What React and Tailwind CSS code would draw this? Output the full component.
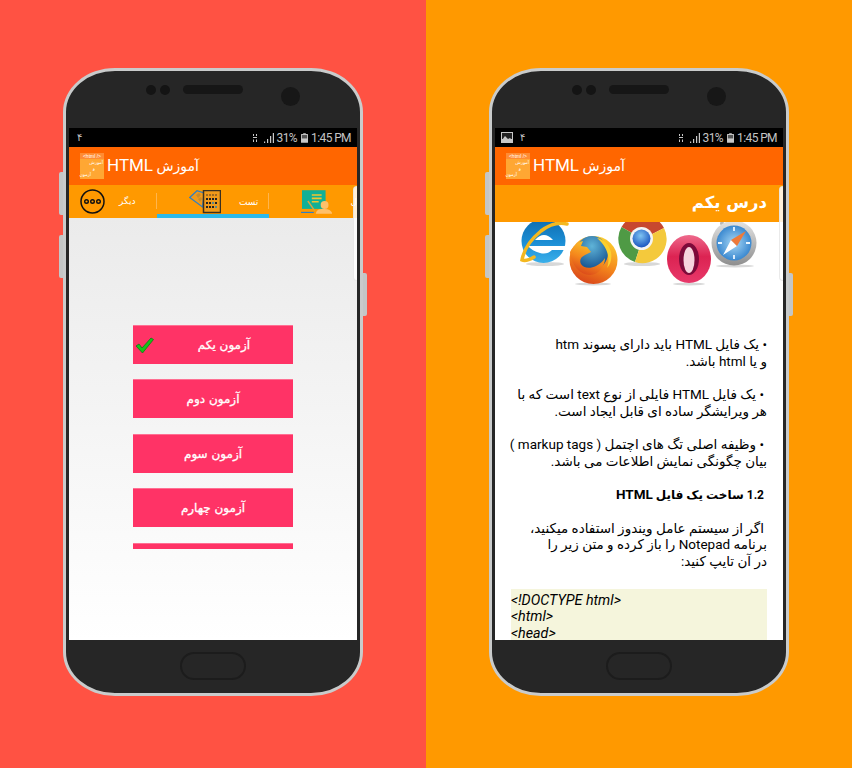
const font = "font-['Roboto','DejaVu_Sans',sans-serif]";

function SignalIcon() {
  return (
    <svg width="24" height="10" viewBox="0 0 24 10" className="text-[#c8c8c8]">
      <path d="M3 1h1v2H3zM6 1h1v2H6zM3 4h4v1H3zM3 6.500h1V9H3zM6 6.500h1V9H6z" fill="currentColor" />
      <path d="M14 8.500h1.200V10H14zM17 6h1.200v4H17zM20 3h1.200v7H20zM22.800 0H24v10h-1.200z" fill="currentColor" />
    </svg>
  );
}

function BatteryIcon() {
  return (
    <svg width="7" height="10" viewBox="0 0 8 11">
      <path d="M2.500 0h3v1H7.500a.5.5 0 0 1 .5.500v9a.5.5 0 0 1-.5.500H.5a.5.5 0 0 1-.5-.5v-9A.5.5 0 0 1 .5 1h2z" fill="#c8c8c8" />
      <rect x="1" y="2" width="6" height="4" fill="#555" />
    </svg>
  );
}

function StatusBar({ withImage }) {
  return (
    <div className="h-[19px] shrink-0 bg-black flex items-center pl-[5px] pr-[6px] text-[#c4c4c4]">
      {withImage && (
        <svg width="12" height="11" viewBox="0 0 12 11" className="ml-[1px] mr-[7px]">
          <rect width="12" height="11" fill="#c8c8c8" />
          <rect x="1" y="1" width="10" height="6" fill="#222" />
          <path d="M1 8l3-4 3 3 2-1 2 2v2H1z" fill="#c8c8c8" />
        </svg>
      )}
      <span className={`text-[10px] ${withImage ? "" : "ml-[3px]"} font-['DejaVu_Sans',sans-serif]`}>۴</span>
      <div className="ml-auto flex items-center text-[12px] tracking-[-0.600px] font-['Roboto',sans-serif]">
        <SignalIcon />
        <span className="ml-[3px]">31%</span>
        <span className="ml-[4px]"><BatteryIcon /></span>
        <span className="ml-[3px]">1:45 PM</span>
      </div>
    </div>
  );
}

function AppBar() {
  return (
    <div className="h-[38px] shrink-0 bg-[#ff6600] flex items-center pl-[11px]">
      <div className="w-[24px] h-[26px] bg-[#ffa733] text-white text-[4.500px] leading-[6px] font-['DejaVu_Sans',sans-serif]">
        <div className="h-[6px] bg-[#ff8c33] text-center font-['Liberation_Sans',sans-serif] text-[5px]">&lt;html /&gt;</div>
        <div dir="rtl" className="pr-[1px] pt-[1px]">
          <div>آموزش</div>
          <div className="pr-[8px]">و</div>
          <div className="pr-[12px]">آزمون</div>
        </div>
      </div>
      <span dir="rtl" className={`ml-[3px] text-[14px] text-white ${font}`}>آموزش <span className="text-[17px]">HTML</span></span>
    </div>
  );
}

function Handle() {
  return <div className="absolute right-0 top-[58px] w-[4px] h-[95px] rounded-l-[5px] bg-white/85 border border-r-0 border-[#dddddd]/60" />;
}

function Phone({ children, withImage }) {
  return (
    <div className="relative w-[300px] h-[628px] rounded-[52px/44px] border-[3px] border-[#c9cbcb] bg-[#262626]">
      <div className="absolute left-[-7px] top-[101px] w-[4px] h-[43px] rounded-l-[2px] bg-[#c4c6c6]" />
      <div className="absolute left-[-7px] top-[164px] w-[4px] h-[43px] rounded-l-[2px] bg-[#c4c6c6]" />
      <div className="absolute right-[-7px] top-[202px] w-[4px] h-[43px] rounded-r-[2px] bg-[#c4c6c6]" />
      <div className="h-[57px] flex items-start pl-[80px] pt-[14px]">
        <div className="w-[10px] h-[10px] rounded-full bg-[#141414]" />
        <div className="ml-[4px] w-[10px] h-[10px] rounded-full bg-[#141414]" />
        <div className="ml-[13px] w-[60px] h-[9px] rounded-full bg-[#161616]" />
        <div className="ml-[38px] mt-[2px] w-[19px] h-[19px] rounded-full bg-[#171717]" />
      </div>
      <div className="mx-[3px] h-[512px] bg-white overflow-hidden relative flex flex-col">
        <StatusBar withImage={withImage} />
        <AppBar />
        {children}
      </div>
      <div className="flex justify-center pt-[12px]">
        <div className="w-[66px] h-[28px] rounded-[14px] border-[2px] border-[#1c1c1c]" />
      </div>
    </div>
  );
}

function TestIcon() {
  return (
    <svg width="32" height="24" viewBox="0 0 32 24">
      <path d="M0.700 7.500L8 0.800L15 3L13.500 17z" fill="#f09a1a" stroke="#2f7fc4" strokeWidth="1.200" />
      <path d="M7 5l3-2 2 2-3 3zM9 9l3-2 1 2-2 3z" fill="#c98a2a" />
      <rect x="14.500" y="0.500" width="17" height="22" fill="#f09a1a" stroke="#3a3020" strokeWidth="1.500" />
      <g fill="#222">
        <rect x="17" y="4" width="2" height="2" fill="#a06a20" /><rect x="20" y="4" width="2" height="2" fill="#a06a20" /><rect x="23" y="4" width="2" height="2" fill="#a06a20" /><rect x="26" y="4" width="2" height="2" fill="#a06a20" />
        <rect x="17" y="8" width="2" height="2" /><rect x="20" y="8" width="2" height="2" /><rect x="23" y="8" width="2" height="2" /><rect x="26" y="8" width="2" height="2" />
        <rect x="17" y="12" width="2" height="2" /><rect x="20" y="12" width="2" height="2" /><rect x="23" y="12" width="2" height="2" fill="#5a8a90" /><rect x="26" y="12" width="2" height="2" />
        <rect x="17" y="16" width="2" height="2" /><rect x="20" y="16" width="2" height="2" /><rect x="23" y="16" width="2" height="2" /><rect x="26" y="16" width="2" height="2" fill="#5a8a90" />
      </g>
    </svg>
  );
}

function TeachIcon() {
  return (
    <svg width="32" height="25" viewBox="0 0 32 25">
      <rect x="1" y="0" width="24" height="19" fill="#12b096" />
      <path d="M11 4h10v1.600H11zM11 7.500h10v1.600H11zM11 11h7v1.600H11z" fill="#f4c430" />
      <path d="M7 11l7 10" stroke="#d9a441" strokeWidth="1.500" />
      <circle cx="24" cy="15" r="4" fill="#ffc06a" />
      <path d="M15 24c1-5 4-5 9-5s7 2 8 5z" fill="#ffc06a" />
      <path d="M0 22h13v1.200H0z" fill="#2f7fc4" />
    </svg>
  );
}

function TabBar() {
  return (
    <div className="h-[33px] shrink-0 bg-[#ff9900] flex text-white text-[9px] font-['DejaVu_Sans',sans-serif]">
      <div className="w-[88px] h-[33px] flex items-center pl-[11px] relative">
        <svg width="25" height="25" viewBox="0 0 25 25">
          <circle cx="12.500" cy="12.500" r="11.500" fill="none" stroke="#111" strokeWidth="1.500" />
          <circle cx="6.500" cy="12.500" r="1.800" fill="none" stroke="#111" strokeWidth="1.400" />
          <circle cx="12.500" cy="12.500" r="1.800" fill="none" stroke="#111" strokeWidth="1.400" />
          <circle cx="18.500" cy="12.500" r="1.800" fill="none" stroke="#111" strokeWidth="1.400" />
        </svg>
        <span dir="rtl" className="ml-[14px]">دیگر</span>
        <div className="absolute right-0 top-[8px] h-[16px] w-px bg-[#ffb54d]" />
      </div>
      <div className="w-[112px] h-[33px] border-b-4 border-[#2db9ea] flex items-start pl-[32px] pt-[5px] relative">
        <TestIcon />
        <span dir="rtl" className="ml-[18px] mt-[6px]">تست</span>
        <div className="absolute right-0 top-[8px] h-[16px] w-px bg-[#ffb54d]" />
      </div>
      <div className="flex-1 flex items-start pl-[32px] pt-[5px] overflow-hidden">
        <TeachIcon />
        <span className="ml-[18px] mt-[6px]">ل</span>
      </div>
    </div>
  );
}

function Check() {
  return (
    <svg width="19" height="17" viewBox="0 0 19 17" className="absolute left-[2px] top-[11px]">
      <path d="M1 9l3-2 3 4L16 1l2.500 1.500L7.500 16z" fill="#17c317" stroke="#0b7a1b" strokeWidth="0.800" />
    </svg>
  );
}

function TestsScreen() {
  // the fifth row is cut off by the list's bottom edge
  const tests = ["آزمون یکم", "آزمون دوم", "آزمون سوم", "آزمون چهارم", ""];
  return (
    <>
      <TabBar />
      <div className="flex-1 bg-gradient-to-b from-[#ebebeb] to-white">
        <div className="mt-[107px] h-[224px] overflow-hidden flex flex-col items-center gap-[15.400px]">
          {tests.map((t, i) => (
            <div key={i} dir="rtl" className={`relative shrink-0 w-[160px] h-[39px] bg-[#ff3366] border-t border-[#ff6f92] flex items-center justify-center text-white text-[12px] [-webkit-text-stroke:0.300px_white] font-['DejaVu_Sans',sans-serif] ${i === 0 ? "pl-[22px]" : ""}`}>
              {i === 0 && <Check />}
              {t}
            </div>
          ))}
        </div>
      </div>
      <Handle />
    </>
  );
}

function BrowserLogos() {
  return (
    <svg width="240" height="64" viewBox="0 0 240 64" className="block ml-[24px] shrink-0">
      <defs>
        <linearGradient id="ie" x1="0" y1="0" x2="0" y2="1">
          <stop offset="0%" stopColor="#0f6db0" />
          <stop offset="55%" stopColor="#1c8fd6" />
          <stop offset="100%" stopColor="#3bb0ea" />
        </linearGradient>
        <radialGradient id="globe" cx="50%" cy="30%" r="70%">
          <stop offset="0%" stopColor="#5fb4d8" />
          <stop offset="100%" stopColor="#14508f" />
        </radialGradient>
        <linearGradient id="fox" x1="0.700" y1="0" x2="0.300" y2="1">
          <stop offset="0%" stopColor="#fcd02e" />
          <stop offset="55%" stopColor="#f4861c" />
          <stop offset="100%" stopColor="#d8431a" />
        </linearGradient>
        <linearGradient id="op" x1="0" y1="0" x2="0" y2="1">
          <stop offset="0%" stopColor="#ee6a8c" />
          <stop offset="45%" stopColor="#dc2352" />
          <stop offset="100%" stopColor="#e8386a" />
        </linearGradient>
        <radialGradient id="saf" cx="50%" cy="50%" r="55%">
          <stop offset="0%" stopColor="#a8d8f5" />
          <stop offset="100%" stopColor="#2f80cc" />
        </radialGradient>
        <linearGradient id="silver" x1="0" y1="0" x2="0" y2="1">
          <stop offset="0%" stopColor="#e4e4e4" />
          <stop offset="100%" stopColor="#8e8e8e" />
        </linearGradient>
        <radialGradient id="chromeC" cx="45%" cy="35%" r="65%">
          <stop offset="0%" stopColor="#7fc4f2" />
          <stop offset="100%" stopColor="#1a55c0" />
        </radialGradient>
      </defs>
      <ellipse cx="26" cy="42" rx="19" ry="2" fill="#d8d8d8" />
      <ellipse cx="74" cy="62" rx="18" ry="1.500" fill="#d8d8d8" />
      <ellipse cx="123" cy="42" rx="18" ry="2" fill="#d8d8d8" />
      <ellipse cx="170" cy="62" rx="16" ry="1.500" fill="#d8d8d8" />
      <ellipse cx="216" cy="44" rx="19" ry="1.500" fill="#d8d8d8" />

      {/* IE */}
      <circle cx="24.500" cy="19" r="22" fill="url(#ie)" />
      <path d="M16 18Q25 8 34 18Z" fill="#ffffff" />
      <path d="M9 24H47L46 28H33Q28 33 21 31Q13 29 9 24Z" fill="#ffffff" />
      <path d="M48 2Q35 -1 22 9Q6 22 3 38Q7 40 15 35" fill="none" stroke="#f4b820" strokeWidth="3.500" strokeLinecap="round" />

      {/* Firefox */}
      <circle cx="74.500" cy="38" r="24" fill="url(#fox)" />
      <ellipse cx="73" cy="31" rx="16" ry="17" fill="url(#globe)" />
      <path d="M51 30C54 24 59 20 64 19L62 24L68 25L72 30L66 33C62 35 60 38 62 42C64 46 71 47 77 44C83 41 86 36 86 36C86 44 80 53 71 53C60 53 52 42 51 30Z" fill="url(#fox)" />
      <path d="M78 16C84 17 90 22 92 30C93 36 92 42 88 46C91 38 90 26 78 16Z" fill="#fcd02e" />

      {/* Chrome */}
      <path d="M102.500 5A24.200 24.200 0 0 1 145 6L123.500 17z" fill="#c7472f" />
      <path d="M102.500 5A24.200 24.200 0 0 0 116 40L123.500 17z" fill="#4f9a45" />
      <path d="M145 6A24.200 24.200 0 0 1 116 40L123.500 17z" fill="#f4c93c" />
      <circle cx="122.500" cy="16.500" r="11.500" fill="#f4f4f4" />
      <circle cx="122.500" cy="16.500" r="9" fill="url(#chromeC)" />

      {/* Opera */}
      <ellipse cx="170" cy="37" rx="22" ry="24" fill="url(#op)" />
      <ellipse cx="170" cy="37" rx="10" ry="16" fill="#7d0a3a" />
      <ellipse cx="170" cy="38" rx="5.500" ry="13" fill="#f6d4dd" />

      {/* Safari */}
      <circle cx="203" cy="1.500" r="2" fill="#b8b8b8" />
      <circle cx="215" cy="21" r="22.500" fill="url(#silver)" />
      <circle cx="215" cy="21" r="17.500" fill="url(#saf)" />
      <path d="M215 5v4M215 33v4M199 21h4M227 21h4" stroke="#eaf6ff" strokeWidth="1.800" />
      <path d="M204 33L212 18L218 24Z" fill="#ffffff" />
      <path d="M227 9L218 24L212 18Z" fill="#ee7a3a" />
    </svg>
  );
}

function Line({ children, extra }) {
  return <div className={`h-[16.700px] leading-[16.700px] whitespace-nowrap ${extra || ""}`}>{children}</div>;
}

function LessonScreen() {
  return (
    <>
      <div dir="rtl" className="h-[37px] shrink-0 bg-[#ff9900] flex items-center pr-[16px] text-white text-[16.500px] font-bold font-['DejaVu_Sans',sans-serif]">
        درس یکم
      </div>
      <BrowserLogos />
      <div className={`shrink-0 mt-[50px] px-[16px] text-[13.500px] text-black ${font}`}>
        <div dir="rtl">
          <Line>• یک فایل HTML باید دارای پسوند htm</Line>
          <Line>و یا html باشد.</Line>
          <Line />
          <Line extra="pr-[3px]">• یک فایل HTML فایلی از نوع text است که با</Line>
          <Line>هر ویرایشگر ساده ای قابل ایجاد است.</Line>
          <Line />
          <Line extra="pr-[3px]">• وظیفه اصلی تگ های اچتمل ( markup tags )</Line>
          <Line>بیان چگونگی نمایش اطلاعات می باشد.</Line>
          <Line />
          <Line extra="pr-[3px] font-bold text-[12px]">1.2 ساخت یک فایل <span className="text-[13.500px]">HTML</span></Line>
          <Line />
          <Line extra="pr-[3px]">اگر از سیستم عامل ویندوز استفاده میکنید،</Line>
          <Line>برنامه Notepad را باز کرده و متن زیر را</Line>
          <Line>در آن تایپ کنید:</Line>
        </div>
        <div className="mt-[19px] h-[60px] pt-[3px] bg-[#f5f5dc] italic text-[14.300px] font-['Roboto',sans-serif]">
          <Line>&lt;!DOCTYPE html&gt;</Line>
          <Line>&lt;html&gt;</Line>
          <Line>&lt;head&gt;</Line>
        </div>
      </div>
      <Handle />
    </>
  );
}

export default function App() {
  return (
    <div className="w-[852px] h-[768px] flex overflow-hidden">
      <div className="w-[426px] h-full bg-[#ff5243] pl-[63px] pt-[68px]">
        <Phone>
          <TestsScreen />
        </Phone>
      </div>
      <div className="w-[426px] h-full bg-[#ff9900] pl-[63px] pt-[68px]">
        <Phone withImage>
          <LessonScreen />
        </Phone>
      </div>
    </div>
  );
}
